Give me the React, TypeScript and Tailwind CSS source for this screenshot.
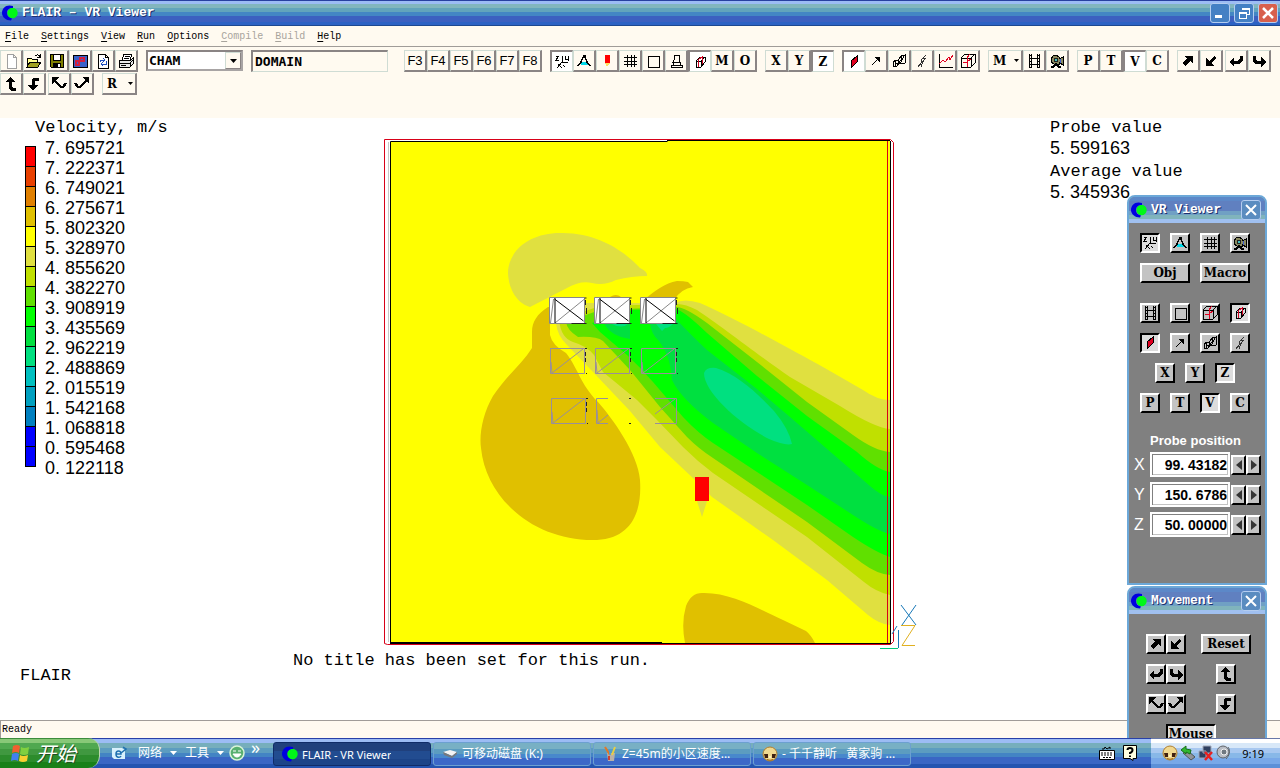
import React from "react";

const ICONS: Record<string, React.ReactNode> = {
  new: <path d="M4 1h6l3 3v11H4zM10 1v3h3" fill="#fff" stroke="#a0a0a0" />,
  open: (
    <>
      <path d="M1 14V5h4l1 1h5v3" fill="#ffff90" stroke="#000" />
      <path d="M1 14l3-5h11l-3 5z" fill="#a0a020" stroke="#000" />
      <path d="M9 3c2-2 4-1 5 1M14 1v3h-3" fill="none" stroke="#000" />
    </>
  ),
  save: (
    <>
      <path d="M1 1h13v13H2l-1-1z" fill="#808000" stroke="#000" />
      <path d="M4 1h7v6H4z" fill="#fff" stroke="#000" />
      <path d="M4 10h8v4H4z" fill="#000" />
      <path d="M9 11h2v3H9z" fill="#fff" />
    </>
  ),
  pal: (
    <>
      <path d="M1 2h14v12H1z" fill="#3a62c8" stroke="#000" />
      <path d="M8 5h4v3H7v4H4V8h4z" fill="none" stroke="#d02040" strokeWidth="2" />
    </>
  ),
  reload: (
    <>
      <path d="M3 1h7l3 3v11H3zM10 1v3h3" fill="#fff" stroke="#000" />
      <path d="M5 9V7h4M8 5l2 2-2 2M11 8v3H7M8 9l-2 2 2 2" fill="none" stroke="#2050c0" />
    </>
  ),
  print: (
    <>
      <path d="M4 7l2-6h8l-2 6" fill="#fff" stroke="#000" />
      <path d="M1 7h12l2-2v6l-3 3H1z" fill="#e8e8e8" stroke="#000" />
      <path d="M1 10h11v4M7 3h5M6 5h5M12 10l3-3M3 12h5" fill="none" stroke="#000" />
    </>
  ),
  axes: (
    <path d="M2 2h3L2 6h3M8 2v6h6M11 2v3h3M14 2v5M8 8l-5 6M4 10l4 4M9 11l2 2" fill="none" stroke="#000" />
  ),
  aim: (
    <>
      <path d="M8 2L5 9l-3 4M8 2l3 7 3 4M7 3h3" fill="none" stroke="#000" strokeWidth="1.5" />
      <path d="M6 9h4l2 3H5z" fill="#00d8e8" />
    </>
  ),
  probe: (
    <>
      <path d="M6 2h5v8H6z" fill="#f00" />
      <path d="M6 10h5l-3 4z" fill="#ffe060" />
    </>
  ),
  grid: <path d="M5 2v12M9 2v12M12 2v12M2 4h13M2 8h13M2 11h13" fill="none" stroke="#000" />,
  square: <path d="M3 3h11v11H3z" fill="none" stroke="#000" />,
  stamp: <path d="M6 2h5v5l1 2H5l1-2zM5 9h7v3H5zM3 12h11v2H3z" fill="none" stroke="#000" />,
  cubeSmall: (
    <>
      <path d="M4 7l4-4h5v5l-4 5H4zM4 7h5v6M9 7l4-4" fill="none" stroke="#000" />
      <path d="M6 13V6l4-3v7" fill="none" stroke="#d00020" />
    </>
  ),
  slice: <path d="M5 7l6-5v6l-6 6z" fill="#e00020" stroke="#000" />,
  vector: (
    <>
      <path d="M4 12l7-7" fill="none" stroke="#000" />
      <path d="M6 4h6v6z" fill="#000" />
    </>
  ),
  iso: (
    <path d="M2 9l3-2 2 1 3-5 4-1v8l-3 1-3-1-2 3H2zM5 7l-1 6M7 8l3 2M10 3v4l-3 4M13 3l-3 6M5 10l3 1" fill="none" stroke="#000" />
  ),
  stream: (
    <path d="M4 14l3-4 1-4 4-4M7 14l1-3 2-4 2-2M5 11l3 1M7 8l3 1M9 5l3 1" fill="none" stroke="#333" />
  ),
  graph: (
    <>
      <path d="M2 1v13h14" fill="none" stroke="#000" />
      <path d="M2 11l4-4 2 2 4-5 1 3 3-5" fill="none" stroke="#e00020" />
    </>
  ),
  cube: (
    <>
      <path d="M1 5l4-4h10v9l-4 4H1zM1 5h10v9M11 5l4-4" fill="none" stroke="#000" />
      <path d="M7 14V5l3-4M3 9h4l4-3" fill="none" stroke="#e00020" />
    </>
  ),
  film: (
    <path d="M3 1v14M5 1v14M11 1v14M13 1v14M3 2h2M3 5h10M3 8h2M11 8h2M3 11h10M3 14h2M11 14h2M11 2h2" fill="none" stroke="#000" />
  ),
  camera: (
    <>
      <path d="M4 3l3-1 3 2v2l4-2v8l-4-3v2H5L2 9V6z" fill="#8a8a60" stroke="#000" />
      <path d="M11 6h1v4h-1z" fill="#4060d0" />
      <path d="M5 5h3v3H5z" fill="#40c0c0" stroke="#222" />
      <path d="M4 14l3-3 3 3M2 14h3M9 14h3" fill="none" stroke="#000" strokeWidth="1.5" />
    </>
  ),
  ne: <path d="M5 3h8v8l-3-3-5 5-3-3 5-4z" fill="#000" />,
  sw: <path d="M11 13H3V5l3 3 5-5 2 2-5 5z" fill="#000" />,
  ret: (
    <>
      <path d="M13 3v4l-2 2H4" fill="none" stroke="#000" strokeWidth="3" />
      <path d="M6 4v10L1 9z" fill="#000" />
    </>
  ),
  fwd: (
    <>
      <path d="M3 3v4l2 2h7" fill="none" stroke="#000" strokeWidth="3" />
      <path d="M10 4v10l5-5z" fill="#000" />
    </>
  ),
  up: (
    <>
      <path d="M7 5v6l2 2h4" fill="none" stroke="#000" strokeWidth="3" />
      <path d="M2 6h10L7 1z" fill="#000" />
    </>
  ),
  down: (
    <>
      <path d="M13 3H9L7 5v5" fill="none" stroke="#000" strokeWidth="3" />
      <path d="M2 9h10l-5 6z" fill="#000" />
    </>
  ),
  rollL: (
    <>
      <path d="M4 5l6 6h2l3-4" fill="none" stroke="#000" strokeWidth="2.5" />
      <path d="M1 1h7L1 8z" fill="#000" />
    </>
  ),
  rollR: (
    <>
      <path d="M12 5l-6 6H4L1 7" fill="none" stroke="#000" strokeWidth="2.5" />
      <path d="M15 1H8l7 7z" fill="#000" />
    </>
  ),
};

function Icon({ name }: { name: string }) {
  return (
    <svg viewBox="0 0 16 16" className="size-4 shrink-0" shapeRendering="crispEdges" aria-hidden="true">
      {ICONS[name]}
    </svg>
  );
}

type Item = { icon?: string; text?: string; label?: string; on?: boolean };

const LETTER = "font-['DejaVu_Serif','Liberation_Serif',serif] text-xs font-bold leading-none";

function ToolButton({ icon, text, label, on }: Item) {
  return (
    <button
      type="button"
      aria-label={label ?? text}
      aria-pressed={on}
      className={
        on
          ? "flex h-[22px] w-[23px] items-center justify-center border border-t-2 border-l-2 border-[#cfdcd4] border-t-[#8a8484] border-l-[#8a8484] bg-white"
          : "flex h-[22px] w-[23px] items-center justify-center border border-r-2 border-b-2 border-[#cfdcd4] border-r-[#8a8484] border-b-[#8a8484] bg-[#fffaf0]"
      }
    >
      {icon ? (
        <Icon name={icon} />
      ) : text && text.length > 1 ? (
        <span className="font-['Liberation_Sans',sans-serif] text-[13px] leading-none">{text}</span>
      ) : (
        <span className={LETTER}>{text}</span>
      )}
    </button>
  );
}

function DropTool({ text }: { text: string }) {
  return (
    <button
      type="button"
      aria-label={text}
      className="flex h-[22px] w-[35px] items-center justify-between border border-r-2 border-b-2 border-[#cfdcd4] border-r-[#8a8484] border-b-[#8a8484] bg-[#fffaf0] pr-[2px] pl-1"
    >
      <span className={LETTER}>{text}</span>
      <svg viewBox="0 0 5 3" className="h-[3px] w-[5px]" aria-hidden="true">
        <path d="M0 0h5L2.500 3z" />
      </svg>
    </button>
  );
}

function Group({ items }: { items: Item[] }) {
  return (
    <div className="flex">
      {items.map((it, i) => (
        <ToolButton key={i} {...it} />
      ))}
    </div>
  );
}

function PanelButton({ icon, text, label, on, wide }: Item & { wide?: boolean }) {
  const tone = on
    ? "border-black border-r-white border-b-white bg-[#dcdcdc]"
    : "border-white border-r-black border-b-black bg-[#c3c3c3]";
  return (
    <button
      type="button"
      aria-label={label ?? text}
      aria-pressed={on}
      className={`flex h-5 shrink-0 items-center justify-center border-2 ${wide ? "w-[50px]" : "w-5"} ${tone}`}
    >
      {icon ? <Icon name={icon} /> : <span className={LETTER}>{text}</span>}
    </button>
  );
}

function Logo() {
  return (
    <svg viewBox="0 0 16 16" className="size-4 shrink-0" aria-hidden="true">
      <circle cx="10.500" cy="8" r="5.200" fill="#00f818" />
      <path d="M7.500.5L11 1v2C7 3 5 5 5 8c0 3 2 5 5 5.500L9 15.500C4 15.500 0 12 0 8 0 4 3 .5 7.500.5z" fill="#0000e0" />
    </svg>
  );
}

const BANDS =
  "bg-[linear-gradient(#2840a0_0_1px,#9cbcf4_1px_4px,#82b6be_4px_8px,#62a4bc_8px_12px,#4386c4_12px_16px,#3c60c0_16px_22px,#2c62c4_22px_25px,#1c4890_25px)]";
const TITLE = "font-['Liberation_Mono',monospace] text-[13px] font-bold text-white [text-shadow:1px_1px_#1c3070]";
const MONO = "font-['Liberation_Mono',monospace]";
const NUM = "font-['Liberation_Sans',sans-serif] text-lg leading-5";

function TitleBar() {
  const box = "flex size-5 items-center justify-center rounded-[3px] border border-[#b4cdf0]";
  return (
    <header className={`flex h-[26px] shrink-0 items-center justify-between pr-[2px] pl-[2px] ${BANDS}`}>
      <div className="flex items-center gap-1">
        <Logo />
        <h1 className={TITLE}>FLAIR – VR Viewer</h1>
      </div>
      <div className="flex gap-1">
        <button type="button" aria-label="Minimize" className={`${box} bg-[#4480c4]`}>
          <svg viewBox="0 0 16 16" className="size-4"><path d="M3 10h7v3H3z" fill="#fff" /></svg>
        </button>
        <button type="button" aria-label="Restore" className={`${box} bg-[#4480c4]`}>
          <svg viewBox="0 0 16 16" className="size-4" fill="none" stroke="#fff" shapeRendering="crispEdges">
            <path d="M3 7h7v6H3zM3 8h7M6 5V3h7v6h-2M6 4h7" />
          </svg>
        </button>
        <button type="button" aria-label="Close" className={`${box} bg-[#d8604c]`}>
          <svg viewBox="0 0 16 16" className="size-4"><path d="M3 3l10 10M13 3L3 13" stroke="#fff" strokeWidth="2.500" /></svg>
        </button>
      </div>
    </header>
  );
}

const MENU = ["File", "Settings", "View", "Run", "Options", "Compile", "Build", "Help"];

function MenuBar() {
  return (
    <nav className={`flex h-[21px] shrink-0 items-center gap-3 border-b border-[#a09c98] bg-[#fffaf0] px-[5px] text-[10px] ${MONO}`}>
      {MENU.map((m) => {
        const off = m === "Compile" || m === "Build";
        return (
          <button key={m} type="button" disabled={off} className={off ? "text-[#a8a49c]" : "text-black"}>
            <span className="underline underline-offset-2">{m[0]}</span>
            {m.slice(1)}
          </button>
        );
      })}
    </nav>
  );
}

function Toolbars() {
  return (
    <div className="h-[71px] shrink-0 bg-[#fffaf0] pt-[3px]">
      <div className="flex items-start gap-2">
        <Group
          items={[
            { icon: "new", label: "New" },
            { icon: "open", label: "Open" },
            { icon: "save", label: "Save" },
            { icon: "pal", label: "Palette" },
            { icon: "reload", label: "Reload" },
            { icon: "print", label: "Print" },
          ]}
        />
        <div className="relative flex">
          <select
            aria-label="Style"
            className="h-[21px] w-[97px] appearance-none border-2 border-[#a8a4a4] border-t-[#8a8484] border-l-[#8a8484] bg-white pl-px font-['DejaVu_Sans_Mono',monospace] text-[13px] leading-none font-bold"
          >
            <option>CHAM</option>
          </select>
          <span className="pointer-events-none absolute top-[2px] right-[2px] flex h-[17px] w-4 items-center justify-center border border-r-[#8a8484] border-b-[#8a8484] border-t-[#cfdcd4] border-l-[#cfdcd4] bg-[#fffaf0]">
            <svg viewBox="0 0 7 4" className="h-1 w-[7px]" aria-hidden="true"><path d="M0 0h7L3.500 4z" /></svg>
          </span>
        </div>
        <input
          aria-label="Object"
          defaultValue="DOMAIN"
          className="mr-2 h-[22px] w-[137px] border border-t-2 border-l-2 border-[#cfdcd4] border-t-[#8a8484] border-l-[#8a8484] bg-[#fffaf0] pl-[2px] font-['DejaVu_Sans_Mono',monospace] text-[13px] leading-none font-bold"
        />
        <Group items={["F3", "F4", "F5", "F6", "F7", "F8"].map((text) => ({ text }))} />
        <Group
          items={[
            { icon: "axes", label: "Axes", on: true },
            { icon: "aim", label: "View direction" },
            { icon: "probe", label: "Probe" },
            { icon: "grid", label: "Mesh" },
            { icon: "square", label: "Frame" },
            { icon: "stamp", label: "Near plane" },
            { icon: "cubeSmall", label: "Wireframe", on: true },
            { text: "M" },
            { text: "O" },
          ]}
        />
        <Group items={[{ text: "X" }, { text: "Y" }, { text: "Z", on: true }]} />
        <Group
          items={[
            { icon: "slice", label: "Contour", on: true },
            { icon: "vector", label: "Vector" },
            { icon: "iso", label: "Iso-surface" },
            { icon: "stream", label: "Streamline" },
            { icon: "graph", label: "Graph" },
            { icon: "cube", label: "Domain box" },
          ]}
        />
        <div className="flex">
          <DropTool text="M" />
          <ToolButton icon="film" label="Animate" />
          <ToolButton icon="camera" label="Record" />
        </div>
        <Group items={[{ text: "P" }, { text: "T" }, { text: "V", on: true }, { text: "C" }]} />
        <div className="flex gap-[2px]">
          <Group items={[{ icon: "ne", label: "Forward" }, { icon: "sw", label: "Back" }]} />
          <Group items={[{ icon: "ret", label: "Turn left" }, { icon: "fwd", label: "Turn right" }]} />
        </div>
      </div>
      <div className="mt-px flex gap-[2px]">
        <Group items={[{ icon: "up", label: "Tilt up" }, { icon: "down", label: "Tilt down" }]} />
        <Group items={[{ icon: "rollL", label: "Roll left" }, { icon: "rollR", label: "Roll right" }]} />
        <div className="ml-[6px]">
          <DropTool text="R" />
        </div>
      </div>
    </div>
  );
}

const LEGEND_COLOURS = [
  "bg-[#ff0000]", "bg-[#e84000]", "bg-[#e08000]", "bg-[#e0c000]", "bg-[#ffff00]", "bg-[#e0e040]",
  "bg-[#c0e000]", "bg-[#60e000]", "bg-[#00ff00]", "bg-[#00e040]", "bg-[#00e080]", "bg-[#00c0c0]",
  "bg-[#00a0c0]", "bg-[#0080c0]", "bg-[#0000ff]", "bg-[#0000ff]",
];
const LEGEND_VALUES = [
  "7. 695721", "7. 222371", "6. 749021", "6. 275671", "5. 802320", "5. 328970", "4. 855620", "4. 382270",
  "3. 908919", "3. 435569", "2. 962219", "2. 488869", "2. 015519", "1. 542168", "1. 068818", "0. 595468",
  "0. 122118",
];

function Legend() {
  return (
    <section className="w-[380px] shrink pl-[25px]">
      <h2 className={`pl-[10px] text-[17px] leading-5 ${MONO}`}>Velocity, m/s</h2>
      <div className="flex gap-[9px]">
        <div className="mt-2 w-[11px] self-start border-x border-b border-black">
          {LEGEND_COLOURS.map((c, i) => (
            <div key={i} className={`h-5 border-t border-black ${c}`} />
          ))}
        </div>
        <ol className={NUM}>
          {LEGEND_VALUES.map((v) => (
            <li key={v}>{v}</li>
          ))}
        </ol>
      </div>
    </section>
  );
}

function SolidBlock({ x }: { x: number }) {
  return (
    <g transform={`translate(${x} 297)`} fill="none">
      <path d="M0 .5h35v26H0z" fill="#fff" stroke="#888" />
      <path d="M5.500 26L35 2M1 26L4 2" stroke="#888" />
      <path d="M5.500 1v25M5 2l29 22" stroke="#000" />
      <path d="M22 26.500h15M35 1h2M36 3v5M37 11v6" stroke="#222" />
    </g>
  );
}

function WireBlock({ x, y }: { x: number; y: number }) {
  return (
    <g transform={`translate(${x} ${y})`} fill="none">
      <path d="M.5.5h34v25H.5zM2 25L33 1M1 14l1 11" stroke="#998f99" />
      <path d="M35 .5h2M35.500 4v11M36 25.500h1" stroke="#222" strokeDasharray="4 2" />
    </g>
  );
}

function ContourPlot() {
  return (
    <svg viewBox="380 118 540 532" className="h-[532px] w-[540px] shrink-0" role="img" aria-label="Velocity contours">
      <path d="M391 141h499v502H391z" fill="#ff0" />
      <g fill="#e0e040">
        <path d="M508 272C509 250 530 233 560 233C600 232 627 254 640 268Q648 272 647 276Q632 276 616 280Q604 286 592 283Q581 280 567 288L530 307C516 303 508 287 508 272Z" />
        <path d="M555 303L675 303Q684 298 700 303C735 318 795 352 823 367L863 390Q877 400 890 400V625Q879 624 868 615L827 580L773 540L712 497L695 480L660 447L630 411L593 372L567 345Q557 335 556 323Z" />
      </g>
      <g fill="#e0c000">
        <path d="M548 307C537 314 532 322 532 332V348C522 364 507 375 493 396C483 413 479 434 481 448C486 500 536 542 597 540C633 538 642 510 640 480C638 453 612 418 598 402C580 384 578 368 566 353Q552 345 550 335V307Z" />
        <path d="M645 299C655 291 665 283 677 281Q684 281 688 282L693 287Q681 289 675 299Z" />
        <path d="M610 297q6-4 11 0z" />
        <path d="M685 643Q681 623 686 606Q691 593 702 593C732 592 762 611 783 620L806 631Q811 635 815 643Z" />
      </g>
      <path d="M559 320L600 306L675 304Q684 303 697 310C720 325 762 358 790 377L840 406Q875 428 890 429V595Q876 592 864 582L807 537L757 503L713 473Q697 461 683 447L657 420L637 400L603 372L594 355Q587 346 573 342Q561 338 559 320Z" fill="#c0e000" />
      <path d="M566 322L600 310L675 307Q684 306 707 323L757 362L807 402L853 435Q875 451 890 452V575Q877 574 862 563L807 522L757 488L713 458Q699 449 687 437L660 407L630 370L603 341Q596 336 578 337Q567 330 566 322Z" fill="#60e000" />
      <path d="M592 323L632 310L675 309Q682 309 707 333L757 376L807 416L857 452Q877 470 890 472V557Q877 553 853 537L807 505L757 472L713 443Q698 433 683 417L653 382Q641 368 627 355L600 332Z" fill="#0f0" />
      <path d="M650 323L675 318Q692 336 707 350L757 389L790 417L870 486Q881 496 890 497V534Q879 532 853 515L807 485L757 453L713 423Q681 399 672 380Q671 356 659 341Q651 334 650 323Z" fill="#00e040" />
      <path d="M604 323Q610 336 630 339V323Z" fill="#00e040" />
      <path d="M704 373Q706 367 716 368C737 374 758 394 774 411Q789 429 792 444Q785 446 769 439C741 425 704 393 704 373Z" fill="#00e080" />
      <path d="M656 324h17q-4 4-8 4l-3 3zM612 324h16q-6 5-16 0z" fill="#00e080" />

      <SolidBlock x={549.5} />
      <SolidBlock x={594.5} />
      <SolidBlock x={640.5} />
      <WireBlock x={550} y={348} />
      <WireBlock x={595} y={348} />
      <WireBlock x={641} y={348} />
      <WireBlock x={551} y={398} />
      <path d="M608 398.500h-11.500v25h11.500M597 410l1 13 10-8M655 398.500h21.500v25H655M655 414l20-15" fill="none" stroke="#998f99" />
      <path d="M629 398.500h2M629 423.500h2" stroke="#222" />

      <path d="M697 501h10l-5 16z" fill="#e0e040" />
      <path d="M695 477h14v24h-14z" fill="#f00" />

      <g fill="none">
        <path d="M390.500 643V141.500h277M667 140.500h223M890.500 141v502M390 643.500h501M390 642.500h272" stroke="#000" />
        <path d="M384.500 139.500h284M384.500 139.500v504l3 1h503l3-3v-499l-3-3H668M887.500 141v502" stroke="#d80018" />
        <path d="M388.500 142v500" stroke="#c8c8c8" />
      </g>
      <g fill="none">
        <path d="M901 605l15 20M916 605l-14 20M898.500 630v18M892 634l5-8" stroke="#1878b8" />
        <path d="M880 648.500h18" stroke="#00c878" />
        <path d="M901 625.500h14l-13 20h13" stroke="#e0b020" />
      </g>
    </svg>
  );
}

function ClosePanel() {
  return (
    <button type="button" aria-label="Close" className="flex size-5 items-center justify-center rounded-[3px] border border-[#b4cdf0] bg-[#5a8cc0]">
      <svg viewBox="0 0 16 16" className="size-4"><path d="M3 3l10 10M13 3L3 13" stroke="#fff" strokeWidth="2" /></svg>
    </button>
  );
}

function Panel({ title, children }: { title: string; children: React.ReactNode }) {
  return (
    <section className="w-[140px] rounded-t-lg border-2 border-[#6ca8d8] bg-[#808080]">
      <header className="flex h-[26px] items-center justify-between rounded-t-md bg-[linear-gradient(#5c88c8_0_4px,#6080c0_4px_14px,#70a0c4_14px_18px,#80b4bc_18px_22px,#a0c0f0_22px)] pr-[4px] pl-[2px]">
        <div className="flex items-center gap-1">
          <Logo />
          <h2 className={TITLE}>{title}</h2>
        </div>
        <ClosePanel />
      </header>
      {children}
    </section>
  );
}

function Row({ items, center }: { items: Item[]; center?: boolean }) {
  return (
    <div className={center ? "flex gap-[10px] pl-[15px]" : "flex gap-[10px]"}>
      {items.map((it, i) => (
        <PanelButton key={i} {...it} />
      ))}
    </div>
  );
}

function Spin({ dir }: { dir: "left" | "right" }) {
  return (
    <button type="button" aria-label={dir === "left" ? "Decrease" : "Increase"} className="flex h-5 w-[15px] items-center justify-center border-2 border-white border-r-black border-b-black bg-[#c3c3c3]">
      <svg viewBox="0 0 6 10" className="h-[10px] w-[6px]" aria-hidden="true">
        <path d={dir === "left" ? "M6 0v10L0 5z" : "M0 0v10l6-5z"} fill="#333" />
      </svg>
    </button>
  );
}

function Coord({ axis, value }: { axis: string; value: string }) {
  return (
    <div className="flex h-[25px] items-center">
      <label htmlFor={`probe-${axis}`} className="w-4 font-['Liberation_Sans',sans-serif] text-base leading-none text-white">
        {axis}
      </label>
      <input
        id={`probe-${axis}`}
        defaultValue={value}
        className="h-[25px] w-20 border-2 border-white bg-white pr-px text-right font-['Liberation_Sans',sans-serif] text-sm leading-none font-bold shadow-[inset_1px_1px_#808080,inset_-1px_-1px_#c3c3c3]"
      />
      <div className="ml-px flex">
        <Spin dir="left" />
        <Spin dir="right" />
      </div>
    </div>
  );
}

function ViewerPanel() {
  return (
    <Panel title="VR Viewer">
      <div className="flex h-[360px] flex-col pt-[10px]">
        <div className="flex flex-col gap-[10px] pl-[11px]">
          <Row items={[{ icon: "axes", label: "Axes", on: true }, { icon: "aim", label: "View direction" }, { icon: "grid", label: "Mesh" }, { icon: "camera", label: "Record" }]} />
          <div className="mb-[10px] flex gap-[10px]">
            <PanelButton text="Obj" wide />
            <PanelButton text="Macro" wide />
          </div>
          <Row items={[{ icon: "film", label: "Animate" }, { icon: "square", label: "Frame" }, { icon: "cube", label: "Domain box" }, { icon: "cubeSmall", label: "Wireframe", on: true }]} />
          <Row items={[{ icon: "slice", label: "Contour", on: true }, { icon: "vector", label: "Vector" }, { icon: "iso", label: "Iso-surface" }, { icon: "stream", label: "Streamline" }]} />
          <Row center items={[{ text: "X" }, { text: "Y" }, { text: "Z", on: true }]} />
          <Row items={[{ text: "P" }, { text: "T" }, { text: "V", on: true }, { text: "C" }]} />
        </div>
        <h3 className="mt-5 pl-[21px] font-['Liberation_Sans',sans-serif] text-[13px] leading-4 font-bold text-white">Probe position</h3>
        <div className="mt-[3px] flex flex-col gap-[5px] pl-[5px]">
          <Coord axis="X" value="99. 43182" />
          <Coord axis="Y" value="150. 6786" />
          <Coord axis="Z" value="50. 00000" />
        </div>
      </div>
    </Panel>
  );
}

function MovementPanel() {
  return (
    <Panel title="Movement">
      <div className="grid grid-cols-[55px_50px] justify-items-start gap-y-[10px] py-5 pl-[17px]">
        <div className="flex"><PanelButton icon="ne" label="Forward" /><PanelButton icon="sw" label="Back" /></div>
        <PanelButton text="Reset" wide />
        <div className="flex"><PanelButton icon="ret" label="Turn left" /><PanelButton icon="fwd" label="Turn right" /></div>
        <div className="justify-self-center"><PanelButton icon="up" label="Tilt up" /></div>
        <div className="flex"><PanelButton icon="rollL" label="Roll left" /><PanelButton icon="rollR" label="Roll right" /></div>
        <div className="justify-self-center"><PanelButton icon="down" label="Tilt down" /></div>
        <div className="col-span-2 pl-5"><PanelButton text="Mouse" wide on /></div>
      </div>
    </Panel>
  );
}

const TASK_BANDS =
  "bg-[linear-gradient(#2840a8_0_1px,#9cbcf4_1px_5px,#76aebc_5px_10px,#5c9cc0_10px_15px,#4384c4_15px_19px,#3a66c4_19px_26px,#2454b0_26px)]";
const TASK_FONT = "font-['Noto_Sans','Noto_Sans_CJK_SC',sans-serif] leading-none text-white";

function DiskIcon() {
  return (
    <svg viewBox="0 0 16 16" className="size-4 shrink-0" aria-hidden="true">
      <path d="M1 6l7-2 7 2-5 4z" fill="#f4f4f4" /><path d="M1 6l9 4v2L2 9zM10 10l5-4v2l-5 4z" fill="#77787c" />
    </svg>
  );
}

function PaintIcon() {
  return (
    <svg viewBox="0 0 16 16" className="size-4 shrink-0" aria-hidden="true">
      <path d="M5 7h8l-1 8H6z" fill="#b8b0a8" /><path d="M3 1l5 8" stroke="#e07828" strokeWidth="2" />
      <path d="M13 1l-3 8" stroke="#e8d040" strokeWidth="2" /><path d="M8 3v6" stroke="#40a0e0" strokeWidth="1.500" />
      <path d="M6 10h2v4H6z" fill="#d04030" />
    </svg>
  );
}

function FaceIcon() {
  return (
    <svg viewBox="0 0 16 16" className="size-4 shrink-0" aria-hidden="true">
      <circle cx="8" cy="8" r="7" fill="#f0d890" stroke="#b08030" />
      <path d="M2 8h4v4H3zM10 8h4l-1 4h-3z" fill="#402010" />
      <path d="M7 10h2v2H7z" fill="#fff0c0" />
      <path d="M5 13.500q3 1.500 6 0" stroke="#a06818" fill="none" />
    </svg>
  );
}

function TaskButton({ icon, text, active }: { icon: React.ReactNode; text: string; active?: boolean }) {
  return (
    <button
      type="button"
      className={
        active
          ? `flex h-6 w-[158px] shrink items-center gap-1 rounded-[3px] border border-[#102c68] bg-[linear-gradient(#20407c_0_8px,#224c90_8px_16px,#1c4488_16px)] px-2 text-left text-[11px] ${TASK_FONT}`
          : `flex h-6 w-[158px] shrink items-center gap-1 rounded-[3px] border border-[#6ca0d0] bg-[linear-gradient(#78b0c4_0_6px,#5c9cc0_6px_11px,#4888cc_11px_15px,#3c68c8_15px)] px-2 text-left text-xs ${TASK_FONT}`
      }
    >
      {icon}
      <span className="truncate py-1 whitespace-pre">{text}</span>
    </button>
  );
}

function TaskBar() {
  return (
    <footer className={`flex h-[30px] shrink-0 items-stretch ${TASK_BANDS}`}>
      <button
        type="button"
        className="flex w-[100px] shrink-0 items-center gap-1 rounded-r-xl border-r border-[#bcd8b0] bg-[linear-gradient(#3c8c3c_0_1px,#88c878_1px_5px,#50a850_5px_11px,#409840_11px_17px,#2c8c2c_17px_24px,#188018_24px)] pl-[10px]"
      >
        <svg viewBox="0 0 20 20" className="size-5" aria-hidden="true">
          <path d="M3 3q4-2 7 0l-1 7q-3-2-7 0z" fill="#f06030" /><path d="M11 4q3 2 8 0l-1 7q-4 2-8 0z" fill="#80d040" />
          <path d="M2 11q4-2 7 0l-1 7q-3-2-7 0z" fill="#4080f0" /><path d="M10 12q3 2 8 0l-1 6q-4 2-8 0z" fill="#f8d030" />
        </svg>
        <span className="pl-[2px] font-['Noto_Sans_CJK_SC',sans-serif] text-[20px] leading-none text-white italic [text-shadow:1px_1px_#205020]">开始</span>
      </button>
      <div className={`flex w-[173px] shrink-0 items-center pl-[11px] text-xs ${TASK_FONT}`}>
        <svg viewBox="0 0 16 16" className="size-4" aria-hidden="true">
          <path d="M1 3h10l3 2v9H3L1 12z" fill="#d8f0fc" /><path d="M5 9h5c0-4-5-4-5 0s4 4 5 2M12 2l3 2-5 4" fill="none" stroke="#2070b0" strokeWidth="1.500" />
        </svg>
        <button type="button" className="ml-[11px] flex items-center gap-2">
          网络<svg viewBox="0 0 7 4" className="h-1 w-[7px]"><path d="M0 0h7L3.500 4z" fill="#fff" /></svg>
        </button>
        <button type="button" className="ml-2 flex items-center gap-2">
          工具<svg viewBox="0 0 7 4" className="h-1 w-[7px]"><path d="M0 0h7L3.500 4z" fill="#fff" /></svg>
        </button>
        <svg viewBox="0 0 16 16" className="ml-[5px] size-4" aria-hidden="true">
          <circle cx="8" cy="8" r="7" fill="#58b070" stroke="#d8f4d8" strokeWidth="1.500" />
          <path d="M4 6h3M9 6h3M4 9c2 4 6 4 8 0z" fill="#fff" stroke="#fff" />
        </svg>
        <span className="mb-3 ml-[6px] text-lg leading-none">»</span>
      </div>
      <div className="flex min-w-0 flex-1 items-center gap-[2px] pt-[2px]">
        <TaskButton active icon={<Logo />} text="FLAIR - VR Viewer" />
        <TaskButton icon={<DiskIcon />} text="可移动磁盘 (K:)" />
        <TaskButton icon={<PaintIcon />} text="Z=45m的小区速度..." />
        <TaskButton icon={<FaceIcon />} text="- 千千静听   黄家驹 ..." />
      </div>
      <div className="flex items-center gap-2 pr-[14px]">
        <svg viewBox="0 0 16 16" className="size-4" aria-hidden="true">
          <path d="M3 4h2l1-2 2 2 3-2v2" fill="none" stroke="#000" />
          <path d="M.5 5.500h15v9H.5z" fill="#fff" stroke="#000" />
          <path d="M2 8h12M2 10h12M4 12.500h8" stroke="#000" strokeDasharray="2 1" />
        </svg>
        <svg viewBox="0 0 14 16" className="h-4 w-[14px]" aria-hidden="true">
          <path d="M.5.5h13v13H10v2l-3-2H.5z" fill="#ffffe0" stroke="#000" />
          <path d="M4.500 5q0-2 2.500-2t2.500 2T7 8v1M7 10.500v1.500" fill="none" stroke="#000" strokeWidth="2" />
        </svg>
      </div>
      <div className="flex w-[129px] shrink-0 items-center justify-between bg-[linear-gradient(#6878a8_0_1px,#ffffff_1px_5px,#d8e8f8_5px_10px,#a8c8f0_10px_15px,#88b8e8_15px_20px,#78a8e8_20px_26px,#5c90d8_26px)] pr-4 pl-[11px]">
        <div className="flex gap-[2px]">
          <FaceIcon />
          <svg viewBox="0 0 16 16" className="size-4" aria-hidden="true">
            <path d="M3 8l8 7 4-3-7-6z" fill="#909498" stroke="#505458" /><path d="M1 5l5-4v3l5 1-1 4-4-2v2z" fill="#30b830" stroke="#187018" />
          </svg>
          <svg viewBox="0 0 16 16" className="size-4" aria-hidden="true">
            <path d="M5 1h8v7H5zM1 6h7v7H1z" fill="#304060" stroke="#a0a8b8" /><path d="M7 7l7 8M14 7l-7 8" stroke="#e82020" strokeWidth="2.500" />
          </svg>
          <svg viewBox="0 0 16 16" className="size-4" aria-hidden="true">
            <circle cx="7" cy="7" r="6" fill="#b8bcc4" stroke="#606468" /><circle cx="8" cy="7" r="3" fill="#707880" stroke="#f0f0f0" />
            <path d="M12 2c3 4 1 9-2 12" fill="none" stroke="#606468" />
          </svg>
        </div>
        <time className="font-['Noto_Sans',sans-serif] text-[11px] leading-none text-black">9:19</time>
      </div>
    </footer>
  );
}

export default function App() {
  return (
    <div className="flex h-screen flex-col overflow-hidden bg-white text-black">
      <TitleBar />
      <MenuBar />
      <Toolbars />
      <div className="relative flex min-h-0 flex-1 flex-col overflow-hidden">
        <main className="min-h-0 flex-1 overflow-hidden">
          <div className="flex">
            <Legend />
            <ContourPlot />
            <section className="flex-1 pl-[130px] whitespace-nowrap">
              <h2 className={`text-[17px] leading-5 ${MONO}`}>Probe value</h2>
              <p className={NUM}>5. 599163</p>
              <h2 className={`mt-1 text-[17px] leading-5 ${MONO}`}>Average value</h2>
              <p className={NUM}>5. 345936</p>
            </section>
          </div>
          <div className={`flex pt-px pl-5 text-[17px] leading-5 ${MONO}`}>
            <p className="w-[273px] pt-[15px]">FLAIR</p>
            <p>No title has been set for this run.</p>
          </div>
        </main>
        <p className={`h-[18px] shrink-0 border-t border-l border-[#a09c98] bg-[#fffaf0] pl-px text-[10px] leading-[17px] ${MONO}`}>Ready</p>
        <div className="absolute top-[77px] right-[13px] flex flex-col gap-[1px]">
          <ViewerPanel />
          <MovementPanel />
        </div>
      </div>
      <TaskBar />
    </div>
  );
}
